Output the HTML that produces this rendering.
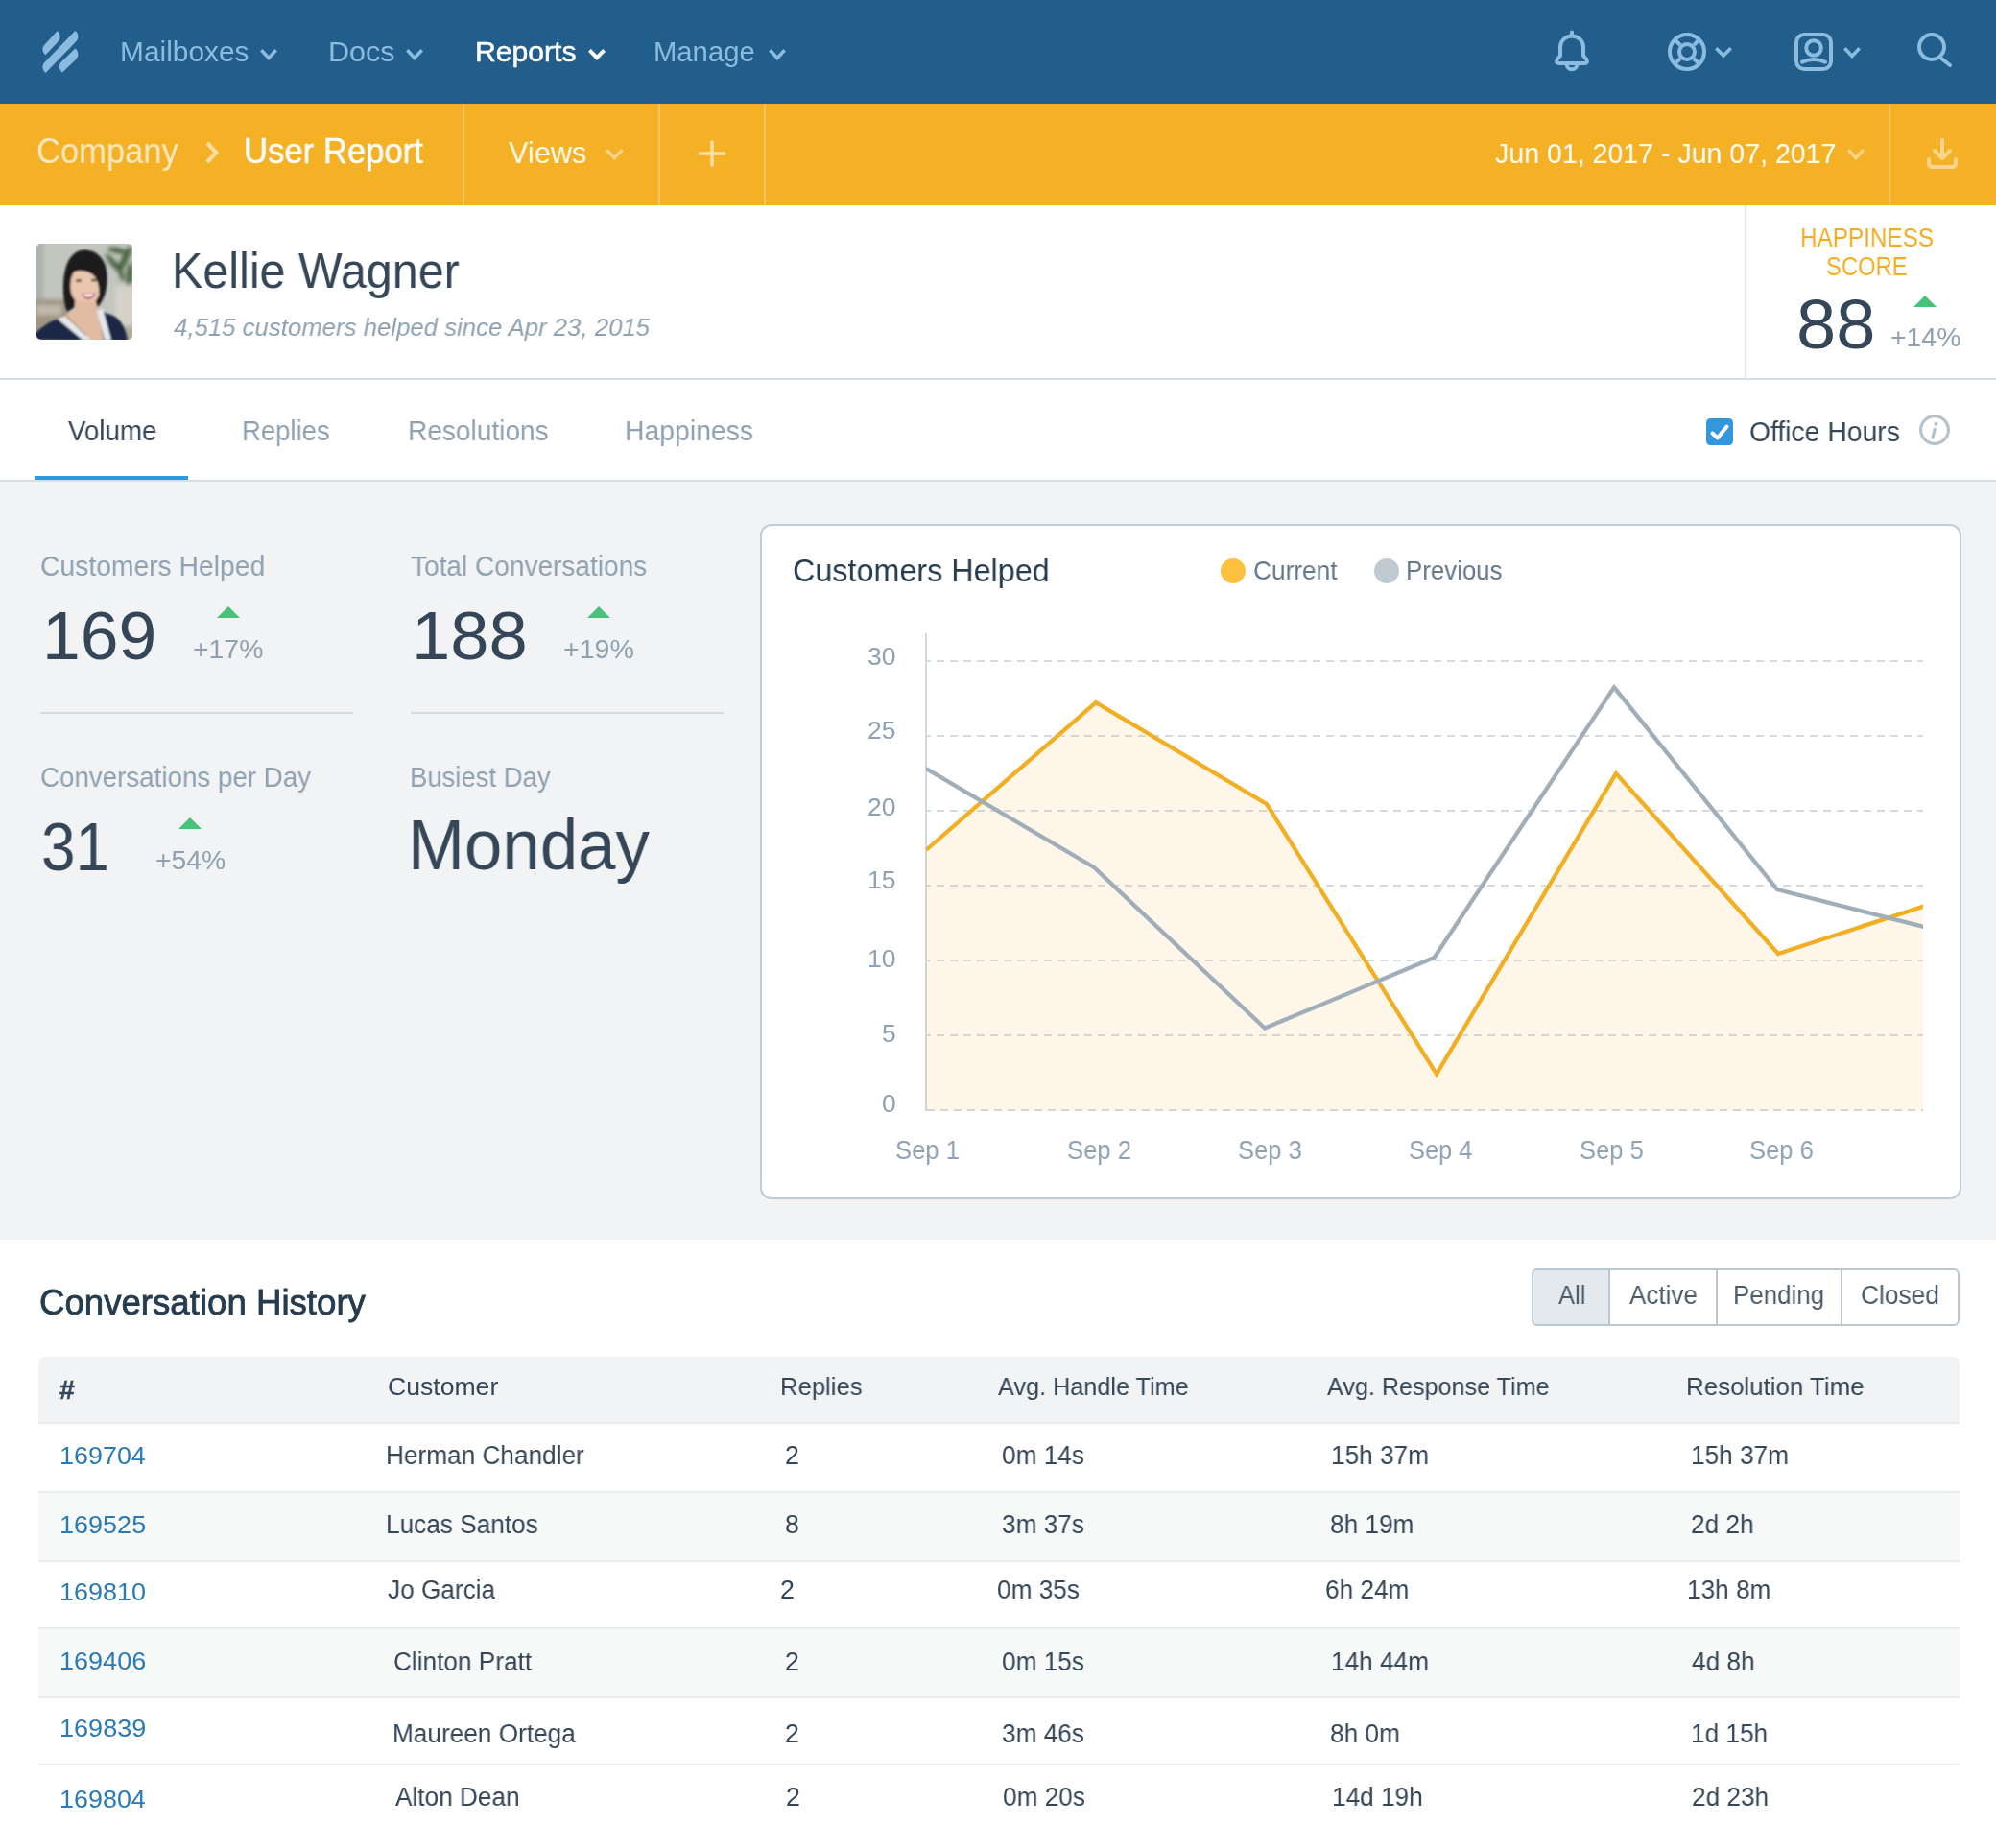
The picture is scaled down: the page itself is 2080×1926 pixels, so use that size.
<!DOCTYPE html>
<html><head><meta charset="utf-8"><style>
html,body{margin:0;padding:0;}
body{width:2080px;height:1926px;position:relative;overflow:hidden;background:#FFFFFF;font-family:"Liberation Sans",sans-serif;}
.t{position:absolute;white-space:nowrap;font-family:"Liberation Sans",sans-serif;will-change:transform;}
svg{display:block;}
</style></head><body>
<div style="position:absolute;left:0px;top:0px;width:2080px;height:108px;background:#215E8B;"></div>
<svg style="position:absolute;left:40px;top:28px;" width="46" height="52" viewBox="0 0 46 52"><g fill="#8BBCE0"><path d="M7.5,29.3 C3.5,26 3.5,21 7,18 L19.6,4.3 C23.5,7.5 23.5,12.5 20,16 Z"/><path d="M7.5,47.9 C3.5,44.5 3.5,39.5 7,36.5 L38.4,4 C42.3,7.3 42.3,12.3 38.8,15.8 Z"/><path d="M25,47.4 C21,44 21,39 24.5,36 L38.4,22.6 C42.3,26 42.3,31 38.8,34.2 Z"/></g></svg>
<div class="t" style="left:124.55px;top:39.65px;font-size:29.00px;line-height:29.00px;color:#8BBCE0;transform:scaleX(1.0304);transform-origin:0 0;">Mailboxes</div>
<svg style="position:absolute;left:271px;top:51px;" width="18" height="12" viewBox="0 0 18 12"><path d="M1.27,1.27 L9.00,9.45 L16.73,1.27" fill="none" stroke="#8BBCE0" stroke-width="3.6" stroke-linejoin="miter"/></svg>
<div class="t" style="left:342.49px;top:39.65px;font-size:29.00px;line-height:29.00px;color:#8BBCE0;transform:scaleX(1.0536);transform-origin:0 0;">Docs</div>
<svg style="position:absolute;left:423px;top:51px;" width="18" height="12" viewBox="0 0 18 12"><path d="M1.27,1.27 L9.00,9.45 L16.73,1.27" fill="none" stroke="#8BBCE0" stroke-width="3.6" stroke-linejoin="miter"/></svg>
<div class="t" style="left:494.53px;top:39.65px;font-size:29.00px;line-height:29.00px;color:#FFFFFF;transform:scaleX(1.0397);transform-origin:0 0;-webkit-text-stroke:0.5px #FFFFFF;">Reports</div>
<svg style="position:absolute;left:613px;top:51px;" width="18" height="12" viewBox="0 0 18 12"><path d="M1.41,1.41 L9.00,9.17 L16.59,1.41" fill="none" stroke="#FFFFFF" stroke-width="4" stroke-linejoin="miter"/></svg>
<div class="t" style="left:680.60px;top:39.65px;font-size:29.00px;line-height:29.00px;color:#8BBCE0;transform:scaleX(1.0084);transform-origin:0 0;">Manage</div>
<svg style="position:absolute;left:801px;top:51px;" width="18" height="12" viewBox="0 0 18 12"><path d="M1.27,1.27 L9.00,9.45 L16.73,1.27" fill="none" stroke="#8BBCE0" stroke-width="3.6" stroke-linejoin="miter"/></svg>
<svg style="position:absolute;left:1620px;top:30px;" width="36" height="46" viewBox="0 0 36 46"><g fill="none" stroke="#8BBCE0" stroke-width="4" stroke-linecap="round" stroke-linejoin="round"><path d="M18,3.5 V7"/><path d="M6,28 L6,19 A12,11.5 0 0 1 30,19 L30,28 L33,31.5 Q35.5,36 31,36 L5,36 Q0.5,36 3,31.5 Z"/><path d="M12.8,38 A5.2,4.2 0 0 0 23.2,38"/></g></svg>
<svg style="position:absolute;left:1736px;top:32px;" width="44" height="44" viewBox="0 0 44 44"><g fill="none" stroke="#8BBCE0" stroke-width="4"><circle cx="22" cy="22" r="18"/><circle cx="22" cy="22" r="8"/><path d="M15,15 L9.3,9.3 M29,15 L34.7,9.3 M15,29 L9.3,34.7 M29,29 L34.7,34.7"/></g></svg>
<svg style="position:absolute;left:1787px;top:49px;" width="18" height="11.5" viewBox="0 0 18 11.5"><path d="M1.27,1.27 L9.00,8.95 L16.73,1.27" fill="none" stroke="#8BBCE0" stroke-width="3.6" stroke-linejoin="miter"/></svg>
<svg style="position:absolute;left:1870px;top:34px;" width="40" height="40" viewBox="0 0 40 40"><g fill="none" stroke="#8BBCE0" stroke-width="4" stroke-linecap="round"><rect x="2" y="2" width="36" height="36" rx="8"/><circle cx="20" cy="16" r="7.8"/><path d="M8,30.7 Q20,25.5 32,30.7"/></g></svg>
<svg style="position:absolute;left:1921px;top:49px;" width="18" height="12" viewBox="0 0 18 12"><path d="M1.27,1.27 L9.00,9.45 L16.73,1.27" fill="none" stroke="#8BBCE0" stroke-width="3.6" stroke-linejoin="miter"/></svg>
<svg style="position:absolute;left:1994px;top:32px;" width="44" height="42" viewBox="0 0 44 42"><g fill="none" stroke="#8BBCE0" stroke-width="4" stroke-linecap="round"><circle cx="19" cy="17" r="13"/><path d="M28.5,28.5 L38,36"/></g></svg>
<div style="position:absolute;left:0px;top:108px;width:2080px;height:106px;background:#F4B125;"></div>
<div class="t" style="left:38.27px;top:140.03px;font-size:36.00px;line-height:36.00px;color:#FCE8C0;transform:scaleX(0.9592);transform-origin:0 0;">Company</div>
<svg style="position:absolute;left:212px;top:146px;" width="18" height="26" viewBox="0 0 18 26"><path d="M4,3 L13.2,13 L4,23" fill="none" stroke="#FBDCA2" stroke-width="4.2"/></svg>
<div class="t" style="left:254.33px;top:140.13px;font-size:36.00px;line-height:36.00px;color:#FFFFFF;transform:scaleX(0.9631);transform-origin:0 0;-webkit-text-stroke:0.4px #FFFFFF;">User Report</div>
<div style="position:absolute;left:482px;top:108px;width:2px;height:106px;background:rgba(255,255,255,0.28);"></div>
<div style="position:absolute;left:686px;top:108px;width:2px;height:106px;background:rgba(255,255,255,0.28);"></div>
<div style="position:absolute;left:796px;top:108px;width:2px;height:106px;background:rgba(255,255,255,0.28);"></div>
<div style="position:absolute;left:1968px;top:108px;width:2px;height:106px;background:rgba(255,255,255,0.28);"></div>
<div class="t" style="left:530.28px;top:143.21px;font-size:32.00px;line-height:32.00px;color:#FFFCF2;transform:scaleX(0.9582);transform-origin:0 0;">Views</div>
<svg style="position:absolute;left:631px;top:155px;" width="18.5" height="12" viewBox="0 0 18.5 12"><path d="M1.20,1.20 L9.25,9.60 L17.30,1.20" fill="none" stroke="#F9D48A" stroke-width="3.4" stroke-linejoin="miter"/></svg>
<svg style="position:absolute;left:727px;top:146px;" width="30" height="28" viewBox="0 0 30 28"><path d="M15,2 V26 M2.2,14 H27.8" fill="none" stroke="#FBDFA6" stroke-width="3.6" stroke-linecap="round"/></svg>
<div class="t" style="left:1557.57px;top:145.20px;font-size:30.00px;line-height:30.00px;color:#FFFFFF;transform:scaleX(0.9511);transform-origin:0 0;">Jun 01, 2017 - Jun 07, 2017</div>
<svg style="position:absolute;left:1925px;top:155px;" width="18" height="12" viewBox="0 0 18 12"><path d="M1.20,1.20 L9.00,9.60 L16.80,1.20" fill="none" stroke="#F9D48A" stroke-width="3.4" stroke-linejoin="miter"/></svg>
<svg style="position:absolute;left:2007px;top:143px;" width="34" height="34" viewBox="0 0 34 34"><g fill="none" stroke="#F9D48A" stroke-width="4" stroke-linecap="round" stroke-linejoin="round"><path d="M3,23 V27 Q3,31 7,31 H27 Q31,31 31,27 V23"/><path d="M17,3 V22"/><path d="M9,14 L17,22 L25,14"/></g></svg>
<div style="position:absolute;left:0px;top:214px;width:2080px;height:181px;background:#FFFFFF;"></div>
<div style="position:absolute;left:0px;top:394px;width:2080px;height:2px;background:#D6DEE4;"></div>
<div style="position:absolute;left:1818px;top:214px;width:2px;height:181px;background:#E1E6EA;"></div>
<svg style="position:absolute;left:38px;top:254px;" width="100" height="100" viewBox="0 0 100 100"><defs><clipPath id="av"><rect width="100" height="100" rx="5"/></clipPath>
<filter id="bl" x="-20%" y="-20%" width="140%" height="140%"><feGaussianBlur stdDeviation="1.1"/></filter>
<filter id="bl2" x="-30%" y="-30%" width="160%" height="160%"><feGaussianBlur stdDeviation="2.2"/></filter></defs>
<g clip-path="url(#av)">
<rect width="100" height="100" fill="#C2C6BF"/>
<g filter="url(#bl2)">
<rect x="-5" y="-5" width="12" height="110" fill="#AEB2AC"/>
<rect x="-5" y="58" width="38" height="50" fill="#A29584"/>
<rect x="0" y="64" width="26" height="10" fill="#C2B9AC"/>
<rect x="82" y="44" width="20" height="48" fill="#D6D2C9"/>
<rect x="68" y="86" width="36" height="20" fill="#B3A999"/>
<g fill="#48633F">
<ellipse cx="92" cy="16" rx="3.5" ry="15" transform="rotate(25 92 16)"/>
<ellipse cx="80" cy="20" rx="3" ry="12" transform="rotate(-40 80 20)"/>
<ellipse cx="97" cy="32" rx="3.5" ry="12" transform="rotate(5 97 32)"/>
<ellipse cx="84" cy="7" rx="10" ry="3" transform="rotate(10 84 7)"/>
<ellipse cx="88" cy="30" rx="2.5" ry="10" transform="rotate(-15 88 30)"/>
</g>
</g>
<g filter="url(#bl)">
<path d="M32,71 C27,60 27,38 30,27 C33,13 42,6.5 50,6.5 C62,6.5 72.5,15 73.5,32 C74.5,46 71,58 64,66 L40,66 Z" fill="#1C1A1D"/>
<path d="M35.5,48 C34.5,36 38,26 47,25 C57,24 66,32 67,42 C68,53 62,63 53,64.5 C44,65 37,58 35.5,48 Z" fill="#EAC6AE"/>
<path d="M40,60 L62,60 L64,70 L71,101 L50,101 L29,75.5 L40,70 Z" fill="#E2BCA2"/>
<path d="M37,30 C40,19 50,15 58,17 C68,20 72.5,30 72.5,40 C72.5,50 69,58 63.5,64.5 C66,54 66,44 62,36 C57,29 47,26 37,30 Z" fill="#1C1A1D"/>
<ellipse cx="44" cy="38.5" rx="3.2" ry="1.3" fill="#3A2A2A"/>
<ellipse cx="60" cy="38" rx="3.2" ry="1.3" fill="#3A2A2A"/>
<path d="M47,52.5 Q55,50.5 62,52 Q58,58.5 53.5,58 Q49,57.5 47,52.5 Z" fill="#B45C68"/>
<path d="M48.5,53 Q55,51.5 60.5,52.5 Q57,55.5 53.5,55.5 Q50,55.5 48.5,53 Z" fill="#F6F2F0"/>
<path d="M-2,100 L-2,94 C6,86 14,81 23,78 L52,101 Z" fill="#1A2747"/>
<path d="M64,69 L80,75 C88,79 93,88 95,101 L70,101 Z" fill="#1A2747"/>
<path d="M22,78.5 L29,75.5 L56,99 L49,101 Z" fill="#E4E8EC"/>
<path d="M63,69.5 L69,68 L78,100 L71,101 Z" fill="#E4E8EC"/>
<path d="M31,75 L52,96" stroke="#2A3550" stroke-width="0.8"/>
</g></g></svg>
<div class="t" style="left:179.03px;top:256.81px;font-size:51.50px;line-height:51.50px;color:#344657;transform:scaleX(0.9406);transform-origin:0 0;">Kellie Wagner</div>
<div class="t" style="left:180.85px;top:327.69px;font-size:26.00px;line-height:26.00px;color:#8FA1B1;transform:scaleX(0.9910);transform-origin:0 0;font-style:italic;">4,515 customers helped since Apr 23, 2015</div>
<div class="t" style="left:1876.01px;top:235.34px;font-size:27.00px;line-height:27.00px;color:#F4AC1F;transform:scaleX(0.9000);transform-origin:0 0;">HAPPINESS</div>
<div class="t" style="left:1903.43px;top:265.14px;font-size:27.00px;line-height:27.00px;color:#F4AC1F;transform:scaleX(0.8808);transform-origin:0 0;">SCORE</div>
<div class="t" style="left:1871.81px;top:301.63px;font-size:72.50px;line-height:72.50px;color:#344657;transform:scaleX(1.0217);transform-origin:0 0;">88</div>
<svg style="position:absolute;left:1994px;top:308px;" width="24" height="12" viewBox="0 0 24 12"><polygon points="0,12 12.0,0 24,12" fill="#48C17A"/></svg>
<div class="t" style="left:1969.64px;top:339.14px;font-size:27.00px;line-height:27.00px;color:#8FA1B1;transform:scaleX(1.0510);transform-origin:0 0;">+14%</div>
<div style="position:absolute;left:0px;top:396px;width:2080px;height:104px;background:#FFFFFF;"></div>
<div class="t" style="left:71.19px;top:433.61px;font-size:30.00px;line-height:30.00px;color:#344657;transform:scaleX(0.9228);transform-origin:0 0;">Volume</div>
<div class="t" style="left:252.24px;top:433.61px;font-size:30.00px;line-height:30.00px;color:#8FA1B1;transform:scaleX(0.9170);transform-origin:0 0;">Replies</div>
<div class="t" style="left:424.70px;top:433.61px;font-size:30.00px;line-height:30.00px;color:#8FA1B1;transform:scaleX(0.9353);transform-origin:0 0;">Resolutions</div>
<div class="t" style="left:650.97px;top:433.61px;font-size:30.00px;line-height:30.00px;color:#8FA1B1;transform:scaleX(0.9457);transform-origin:0 0;">Happiness</div>
<div style="position:absolute;left:36px;top:496px;width:160px;height:4px;background:#3497DA;"></div>
<svg style="position:absolute;left:1778px;top:436px;" width="28" height="28" viewBox="0 0 28 28"><rect width="28" height="28" rx="4.5" fill="#3497DA"/><path d="M6.5,15.5 L11.8,20.5 L21.5,8.5" fill="none" stroke="#FFFFFF" stroke-width="4" stroke-linecap="round" stroke-linejoin="round"/></svg>
<div class="t" style="left:1822.67px;top:434.83px;font-size:29.50px;line-height:29.50px;color:#344657;transform:scaleX(0.9599);transform-origin:0 0;">Office Hours</div>
<svg style="position:absolute;left:1998px;top:430px;" width="36" height="36" viewBox="0 0 36 36"><g fill="none" stroke="#B6C2CC" stroke-width="3.2" stroke-linecap="round"><circle cx="18" cy="18" r="14.4"/><path d="M18.3,17.2 L16,26"/></g><circle cx="19.4" cy="11.8" r="2" fill="#B6C2CC"/></svg>
<div style="position:absolute;left:0px;top:500px;width:2080px;height:792px;background:#F1F3F5;"></div>
<div style="position:absolute;left:0px;top:500px;width:2080px;height:2px;background:#D6DEE4;"></div>
<div class="t" style="left:41.79px;top:575.33px;font-size:29.50px;line-height:29.50px;color:#8FA1B1;transform:scaleX(0.9588);transform-origin:0 0;">Customers Helped</div>
<div class="t" style="left:43.86px;top:626.50px;font-size:71.00px;line-height:71.00px;color:#344657;transform:scaleX(1.0073);transform-origin:0 0;">169</div>
<div class="t" style="left:201.34px;top:662.04px;font-size:28.30px;line-height:28.30px;color:#8FA1B1;transform:scaleX(1.0027);transform-origin:0 0;">+17%</div>
<svg style="position:absolute;left:226px;top:632px;" width="24" height="12" viewBox="0 0 24 12"><polygon points="0,12 12.0,0 24,12" fill="#48C17A"/></svg>
<div class="t" style="left:427.98px;top:575.43px;font-size:29.50px;line-height:29.50px;color:#8FA1B1;transform:scaleX(0.9504);transform-origin:0 0;">Total Conversations</div>
<div class="t" style="left:429.30px;top:626.90px;font-size:71.00px;line-height:71.00px;color:#344657;transform:scaleX(1.0184);transform-origin:0 0;">188</div>
<div class="t" style="left:587.13px;top:662.04px;font-size:28.30px;line-height:28.30px;color:#8FA1B1;transform:scaleX(1.0084);transform-origin:0 0;">+19%</div>
<svg style="position:absolute;left:612px;top:632px;" width="24" height="12" viewBox="0 0 24 12"><polygon points="0,12 12.0,0 24,12" fill="#48C17A"/></svg>
<div class="t" style="left:42.01px;top:795.03px;font-size:29.50px;line-height:29.50px;color:#8FA1B1;transform:scaleX(0.9400);transform-origin:0 0;">Conversations per Day</div>
<div class="t" style="left:42.97px;top:846.60px;font-size:71.00px;line-height:71.00px;color:#344657;transform:scaleX(0.8992);transform-origin:0 0;">31</div>
<div class="t" style="left:161.95px;top:882.04px;font-size:28.30px;line-height:28.30px;color:#8FA1B1;transform:scaleX(0.9957);transform-origin:0 0;">+54%</div>
<svg style="position:absolute;left:186px;top:852px;" width="24" height="12" viewBox="0 0 24 12"><polygon points="0,12 12.0,0 24,12" fill="#48C17A"/></svg>
<div class="t" style="left:426.55px;top:795.03px;font-size:29.50px;line-height:29.50px;color:#8FA1B1;transform:scaleX(0.9309);transform-origin:0 0;">Busiest Day</div>
<div class="t" style="left:425.19px;top:843.94px;font-size:74.50px;line-height:74.50px;color:#344657;transform:scaleX(0.9505);transform-origin:0 0;">Monday</div>
<div style="position:absolute;left:42px;top:742px;width:326px;height:2px;background:#D3DBE2;"></div>
<div style="position:absolute;left:428px;top:742px;width:326px;height:2px;background:#D3DBE2;"></div>
<div style="position:absolute;left:792px;top:546px;width:1248px;height:700px;border:2px solid #C0CCD6;border-radius:12px;background:#FFFFFF;"></div>
<div class="t" style="left:825.68px;top:577.84px;font-size:33.50px;line-height:33.50px;color:#253B4E;transform:scaleX(0.9649);transform-origin:0 0;">Customers Helped</div>
<svg style="position:absolute;left:1272px;top:582px;" width="26" height="26" viewBox="0 0 26 26"><circle cx="13" cy="13" r="13" fill="#FDC13F"/></svg>
<div class="t" style="left:1305.99px;top:580.89px;font-size:27.30px;line-height:27.30px;color:#637789;transform:scaleX(0.9610);transform-origin:0 0;">Current</div>
<svg style="position:absolute;left:1432px;top:582px;" width="26" height="26" viewBox="0 0 26 26"><circle cx="13" cy="13" r="13" fill="#BFCAD3"/></svg>
<div class="t" style="left:1465.48px;top:580.89px;font-size:27.30px;line-height:27.30px;color:#637789;transform:scaleX(0.9466);transform-origin:0 0;">Previous</div>
<div class="t" style="left:918.77px;top:1137.07px;font-size:26.50px;line-height:26.50px;color:#8FA0B0;">0</div>
<div class="t" style="left:918.85px;top:1063.57px;font-size:26.50px;line-height:26.50px;color:#8FA0B0;">5</div>
<div class="t" style="left:904.04px;top:985.57px;font-size:26.50px;line-height:26.50px;color:#8FA0B0;">10</div>
<div class="t" style="left:904.12px;top:903.57px;font-size:26.50px;line-height:26.50px;color:#8FA0B0;">15</div>
<div class="t" style="left:904.04px;top:827.57px;font-size:26.50px;line-height:26.50px;color:#8FA0B0;">20</div>
<div class="t" style="left:904.12px;top:747.57px;font-size:26.50px;line-height:26.50px;color:#8FA0B0;">25</div>
<div class="t" style="left:904.04px;top:671.07px;font-size:26.50px;line-height:26.50px;color:#8FA0B0;">30</div>
<svg style="position:absolute;left:793px;top:546px;" width="1251" height="704" viewBox="0 0 1251 704"><defs><clipPath id="pc"><rect x="172" y="0" width="1039" height="700"/></clipPath><clipPath id="fc"><rect x="171" y="0" width="1040" height="700"/></clipPath></defs><line x1="173" y1="611" x2="1211" y2="611" stroke="#D3DAE1" stroke-width="2" stroke-dasharray="8 6" stroke-dashoffset="0"/><line x1="173" y1="533" x2="1211" y2="533" stroke="#D3DAE1" stroke-width="2" stroke-dasharray="8 6" stroke-dashoffset="4"/><line x1="173" y1="455" x2="1211" y2="455" stroke="#D3DAE1" stroke-width="2" stroke-dasharray="8 6" stroke-dashoffset="4"/><line x1="173" y1="377" x2="1211" y2="377" stroke="#D3DAE1" stroke-width="2" stroke-dasharray="8 6" stroke-dashoffset="4"/><line x1="173" y1="299" x2="1211" y2="299" stroke="#D3DAE1" stroke-width="2" stroke-dasharray="8 6" stroke-dashoffset="4"/><line x1="173" y1="221" x2="1211" y2="221" stroke="#D3DAE1" stroke-width="2" stroke-dasharray="8 6" stroke-dashoffset="4"/><line x1="173" y1="143" x2="1211" y2="143" stroke="#D3DAE1" stroke-width="2" stroke-dasharray="8 6" stroke-dashoffset="4"/><line x1="172" y1="114" x2="172" y2="612" stroke="#D0D9E1" stroke-width="2"/><g clip-path="url(#fc)"><polygon points="171.0,340.0 172.0,340.0 349.0,186.2 527.0,292.0 704.0,573.4 891.0,260.2 1060.0,448.0 1241.0,389.0 1241,612 171,612" fill="rgba(244,177,37,0.1)"/></g><g clip-path="url(#pc)"><polyline points="172.0,340.0 349.0,186.2 527.0,292.0 704.0,573.4 891.0,260.2 1060.0,448.0 1241.0,389.0" fill="none" stroke="#F2AF24" stroke-width="4.3" stroke-linejoin="miter" stroke-miterlimit="10"/><polyline points="172.0,255.0 347.0,358.0 525.0,525.5 701.6,452.0 889.0,170.3 1059.0,381.0 1241.0,427.5" fill="none" stroke="#A0AEBA" stroke-width="4.3" stroke-linejoin="miter" stroke-miterlimit="10"/></g></svg>
<div class="t" style="left:932.60px;top:1185.48px;font-size:27.20px;line-height:27.20px;color:#8FA0B0;transform:scaleX(0.9410);transform-origin:0 0;">Sep 1</div>
<div class="t" style="left:1112.40px;top:1185.48px;font-size:27.20px;line-height:27.20px;color:#8FA0B0;transform:scaleX(0.9417);transform-origin:0 0;">Sep 2</div>
<div class="t" style="left:1290.30px;top:1185.48px;font-size:27.20px;line-height:27.20px;color:#8FA0B0;transform:scaleX(0.9391);transform-origin:0 0;">Sep 3</div>
<div class="t" style="left:1468.21px;top:1185.48px;font-size:27.20px;line-height:27.20px;color:#8FA0B0;transform:scaleX(0.9340);transform-origin:0 0;">Sep 4</div>
<div class="t" style="left:1646.40px;top:1185.48px;font-size:27.20px;line-height:27.20px;color:#8FA0B0;transform:scaleX(0.9384);transform-origin:0 0;">Sep 5</div>
<div class="t" style="left:1823.30px;top:1185.48px;font-size:27.20px;line-height:27.20px;color:#8FA0B0;transform:scaleX(0.9391);transform-origin:0 0;">Sep 6</div>
<div style="position:absolute;left:0px;top:1292px;width:2080px;height:634px;background:#FFFFFF;"></div>
<div class="t" style="left:41.27px;top:1339.90px;font-size:36.50px;line-height:36.50px;color:#253B4E;transform:scaleX(1.0034);transform-origin:0 0;-webkit-text-stroke:0.8px #253B4E;">Conversation History</div>
<div style="position:absolute;left:1596px;top:1322px;width:442px;height:56px;border:2px solid #BCC7D0;border-radius:6px;background:#FFFFFF;overflow:hidden;"><div style="position:absolute;left:0;top:0;width:80px;height:56px;background:#E4E9ED;"></div></div>
<div style="position:absolute;left:1676px;top:1322px;width:2px;height:60px;background:#BCC7D0;"></div>
<div style="position:absolute;left:1788px;top:1322px;width:2px;height:60px;background:#BCC7D0;"></div>
<div style="position:absolute;left:1918px;top:1322px;width:2px;height:60px;background:#BCC7D0;"></div>
<div class="t" style="left:1623.75px;top:1337.14px;font-size:27.00px;line-height:27.00px;color:#4B5B68;transform:scaleX(0.9481);transform-origin:0 0;">All</div>
<div class="t" style="left:1698.25px;top:1337.14px;font-size:27.00px;line-height:27.00px;color:#4B5B68;transform:scaleX(0.9643);transform-origin:0 0;">Active</div>
<div class="t" style="left:1806.37px;top:1337.14px;font-size:27.00px;line-height:27.00px;color:#4B5B68;transform:scaleX(0.9606);transform-origin:0 0;">Pending</div>
<div class="t" style="left:1939.38px;top:1337.14px;font-size:27.00px;line-height:27.00px;color:#4B5B68;transform:scaleX(0.9744);transform-origin:0 0;">Closed</div>
<div style="position:absolute;left:40px;top:1414px;width:2002px;height:68px;background:#F1F3F5;border-radius:6px 6px 0 0;"></div>
<div style="position:absolute;left:40px;top:1482px;width:2002px;height:2px;background:#E6EAED;"></div>
<div class="t" style="left:62.12px;top:1433.87px;font-size:28.50px;line-height:28.50px;color:#344657;font-weight:bold;-webkit-text-stroke:0.5px #344657;">#</div>
<div class="t" style="left:403.67px;top:1432.07px;font-size:26.50px;line-height:26.50px;color:#344657;transform:scaleX(1.0035);transform-origin:0 0;">Customer</div>
<div class="t" style="left:812.60px;top:1432.07px;font-size:26.50px;line-height:26.50px;color:#344657;transform:scaleX(0.9677);transform-origin:0 0;">Replies</div>
<div class="t" style="left:1040.15px;top:1432.07px;font-size:26.50px;line-height:26.50px;color:#344657;transform:scaleX(0.9521);transform-origin:0 0;">Avg. Handle Time</div>
<div class="t" style="left:1382.75px;top:1432.07px;font-size:26.50px;line-height:26.50px;color:#344657;transform:scaleX(0.9490);transform-origin:0 0;">Avg. Response Time</div>
<div class="t" style="left:1757.08px;top:1432.07px;font-size:26.50px;line-height:26.50px;color:#344657;transform:scaleX(0.9766);transform-origin:0 0;">Resolution Time</div>
<div style="position:absolute;left:40px;top:1484px;width:2002px;height:70px;background:#FFFFFF;"></div>
<div style="position:absolute;left:40px;top:1554px;width:2002px;height:2px;background:#E8ECEF;"></div>
<div class="t" style="left:61.75px;top:1503.57px;font-size:26.50px;line-height:26.50px;color:#2A7AB6;transform:scaleX(1.0158);transform-origin:0 0;">169704</div>
<div class="t" style="left:402.25px;top:1503.81px;font-size:26.80px;line-height:26.80px;color:#344657;transform:scaleX(0.9776);transform-origin:0 0;">Herman Chandler</div>
<div class="t" style="left:817.96px;top:1503.81px;font-size:26.80px;line-height:26.80px;color:#344657;">2</div>
<div class="t" style="left:1044.08px;top:1503.81px;font-size:26.80px;line-height:26.80px;color:#344657;transform:scaleX(0.9776);transform-origin:0 0;">0m 14s</div>
<div class="t" style="left:1386.81px;top:1503.81px;font-size:26.80px;line-height:26.80px;color:#344657;transform:scaleX(0.9776);transform-origin:0 0;">15h 37m</div>
<div class="t" style="left:1762.41px;top:1503.81px;font-size:26.80px;line-height:26.80px;color:#344657;transform:scaleX(0.9776);transform-origin:0 0;">15h 37m</div>
<div style="position:absolute;left:40px;top:1556px;width:2002px;height:70px;background:#F7F9F9;"></div>
<div style="position:absolute;left:40px;top:1626px;width:2002px;height:2px;background:#E8ECEF;"></div>
<div class="t" style="left:61.75px;top:1575.57px;font-size:26.50px;line-height:26.50px;color:#2A7AB6;transform:scaleX(1.0196);transform-origin:0 0;">169525</div>
<div class="t" style="left:402.25px;top:1575.81px;font-size:26.80px;line-height:26.80px;color:#344657;transform:scaleX(0.9776);transform-origin:0 0;">Lucas Santos</div>
<div class="t" style="left:818.15px;top:1575.81px;font-size:26.80px;line-height:26.80px;color:#344657;">8</div>
<div class="t" style="left:1044.00px;top:1575.81px;font-size:26.80px;line-height:26.80px;color:#344657;transform:scaleX(0.9776);transform-origin:0 0;">3m 37s</div>
<div class="t" style="left:1386.27px;top:1575.81px;font-size:26.80px;line-height:26.80px;color:#344657;transform:scaleX(0.9776);transform-origin:0 0;">8h 19m</div>
<div class="t" style="left:1762.09px;top:1575.81px;font-size:26.80px;line-height:26.80px;color:#344657;transform:scaleX(0.9776);transform-origin:0 0;">2d 2h</div>
<div style="position:absolute;left:40px;top:1628px;width:2002px;height:68px;background:#FFFFFF;"></div>
<div style="position:absolute;left:40px;top:1696px;width:2002px;height:2px;background:#E8ECEF;"></div>
<div class="t" style="left:61.75px;top:1645.57px;font-size:26.50px;line-height:26.50px;color:#2A7AB6;transform:scaleX(1.0186);transform-origin:0 0;">169810</div>
<div class="t" style="left:404.01px;top:1643.81px;font-size:26.80px;line-height:26.80px;color:#344657;transform:scaleX(0.9776);transform-origin:0 0;">Jo Garcia</div>
<div class="t" style="left:813.36px;top:1643.81px;font-size:26.80px;line-height:26.80px;color:#344657;">2</div>
<div class="t" style="left:1039.18px;top:1643.81px;font-size:26.80px;line-height:26.80px;color:#344657;transform:scaleX(0.9776);transform-origin:0 0;">0m 35s</div>
<div class="t" style="left:1381.49px;top:1643.81px;font-size:26.80px;line-height:26.80px;color:#344657;transform:scaleX(0.9776);transform-origin:0 0;">6h 24m</div>
<div class="t" style="left:1757.91px;top:1643.81px;font-size:26.80px;line-height:26.80px;color:#344657;transform:scaleX(0.9776);transform-origin:0 0;">13h 8m</div>
<div style="position:absolute;left:40px;top:1698px;width:2002px;height:70px;background:#F7F9F9;"></div>
<div style="position:absolute;left:40px;top:1768px;width:2002px;height:2px;background:#E8ECEF;"></div>
<div class="t" style="left:61.75px;top:1717.57px;font-size:26.50px;line-height:26.50px;color:#2A7AB6;transform:scaleX(1.0202);transform-origin:0 0;">169406</div>
<div class="t" style="left:410.29px;top:1719.31px;font-size:26.80px;line-height:26.80px;color:#344657;transform:scaleX(0.9776);transform-origin:0 0;">Clinton Pratt</div>
<div class="t" style="left:817.66px;top:1719.31px;font-size:26.80px;line-height:26.80px;color:#344657;">2</div>
<div class="t" style="left:1043.98px;top:1719.31px;font-size:26.80px;line-height:26.80px;color:#344657;transform:scaleX(0.9776);transform-origin:0 0;">0m 15s</div>
<div class="t" style="left:1386.81px;top:1719.31px;font-size:26.80px;line-height:26.80px;color:#344657;transform:scaleX(0.9776);transform-origin:0 0;">14h 44m</div>
<div class="t" style="left:1762.82px;top:1719.31px;font-size:26.80px;line-height:26.80px;color:#344657;transform:scaleX(0.9776);transform-origin:0 0;">4d 8h</div>
<div style="position:absolute;left:40px;top:1770px;width:2002px;height:68px;background:#FFFFFF;"></div>
<div style="position:absolute;left:40px;top:1838px;width:2002px;height:2px;background:#E8ECEF;"></div>
<div class="t" style="left:61.74px;top:1788.07px;font-size:26.50px;line-height:26.50px;color:#2A7AB6;transform:scaleX(1.0215);transform-origin:0 0;">169839</div>
<div class="t" style="left:409.45px;top:1793.81px;font-size:26.80px;line-height:26.80px;color:#344657;transform:scaleX(0.9776);transform-origin:0 0;">Maureen Ortega</div>
<div class="t" style="left:817.66px;top:1793.81px;font-size:26.80px;line-height:26.80px;color:#344657;">2</div>
<div class="t" style="left:1044.00px;top:1793.81px;font-size:26.80px;line-height:26.80px;color:#344657;transform:scaleX(0.9776);transform-origin:0 0;">3m 46s</div>
<div class="t" style="left:1386.27px;top:1793.81px;font-size:26.80px;line-height:26.80px;color:#344657;transform:scaleX(0.9776);transform-origin:0 0;">8h 0m</div>
<div class="t" style="left:1762.41px;top:1793.81px;font-size:26.80px;line-height:26.80px;color:#344657;transform:scaleX(0.9776);transform-origin:0 0;">1d 15h</div>
<div style="position:absolute;left:40px;top:1840px;width:2002px;height:86px;background:#FFFFFF;"></div>
<div class="t" style="left:61.75px;top:1861.57px;font-size:26.50px;line-height:26.50px;color:#2A7AB6;transform:scaleX(1.0158);transform-origin:0 0;">169804</div>
<div class="t" style="left:411.55px;top:1859.81px;font-size:26.80px;line-height:26.80px;color:#344657;transform:scaleX(0.9776);transform-origin:0 0;">Alton Dean</div>
<div class="t" style="left:819.26px;top:1859.81px;font-size:26.80px;line-height:26.80px;color:#344657;">2</div>
<div class="t" style="left:1044.98px;top:1859.81px;font-size:26.80px;line-height:26.80px;color:#344657;transform:scaleX(0.9776);transform-origin:0 0;">0m 20s</div>
<div class="t" style="left:1387.81px;top:1859.81px;font-size:26.80px;line-height:26.80px;color:#344657;transform:scaleX(0.9776);transform-origin:0 0;">14d 19h</div>
<div class="t" style="left:1763.09px;top:1859.81px;font-size:26.80px;line-height:26.80px;color:#344657;transform:scaleX(0.9776);transform-origin:0 0;">2d 23h</div>
</body></html>
